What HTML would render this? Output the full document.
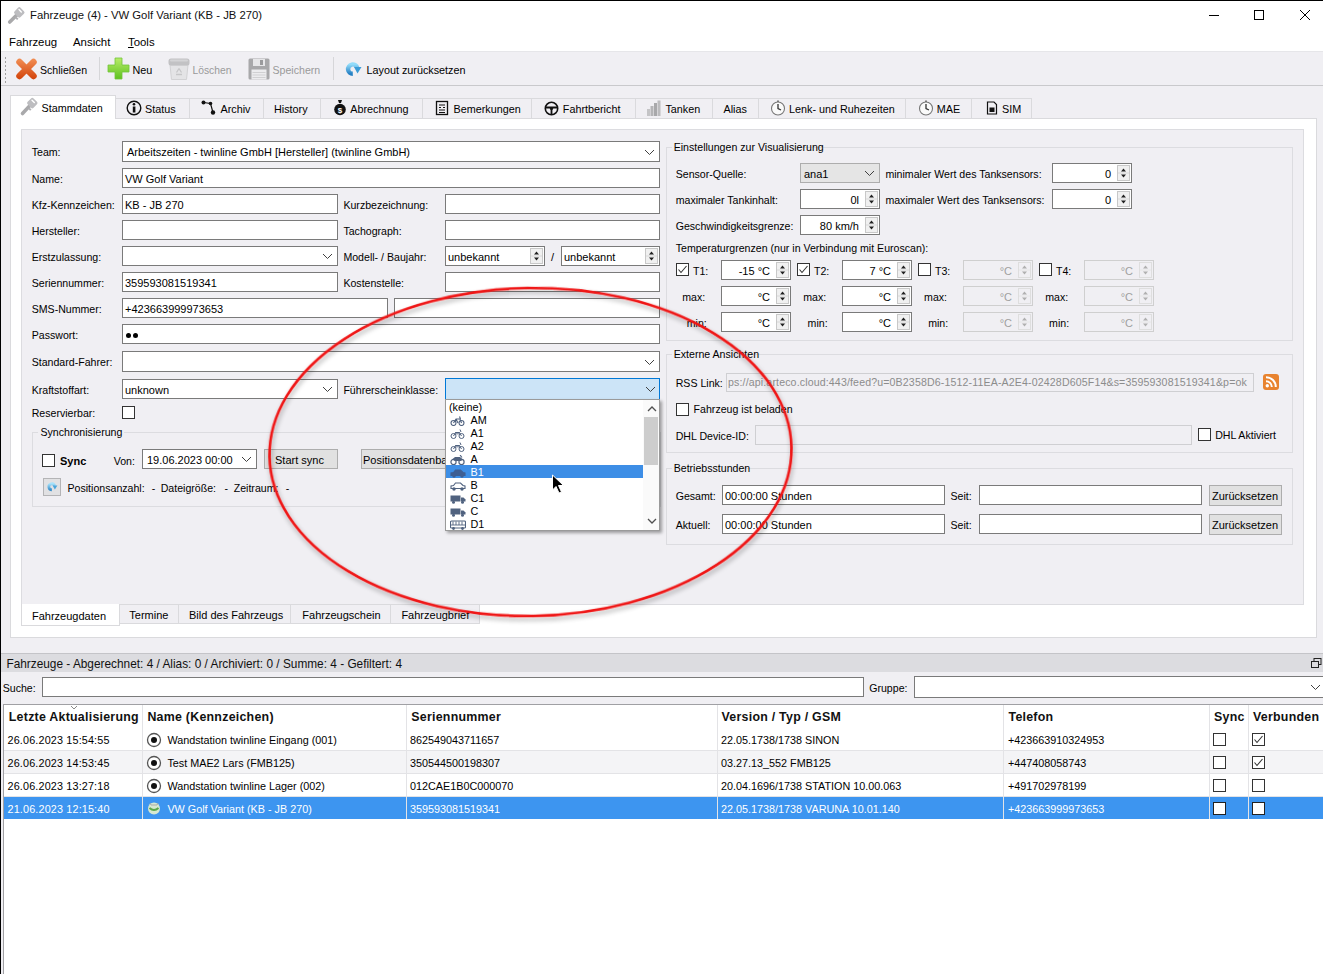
<!DOCTYPE html>
<html><head><meta charset="utf-8"><style>
html,body{margin:0;padding:0}
body{width:1323px;height:974px;overflow:hidden;position:relative;background:#f0eff3;font-family:"Liberation Sans", sans-serif}
.a{position:absolute}
.t{position:absolute;font-size:11px;line-height:13px;white-space:nowrap;color:#000}
u{text-decoration:underline}
</style></head><body>
<div class="a" style="left:0px;top:0px;width:1323px;height:52px;background:#ffffff;"></div>
<div class="a" style="left:0px;top:51px;width:1323px;height:1px;background:#e6e6e9;"></div>
<div class="a" style="left:0px;top:0px;width:1323px;height:1px;background:#000;"></div>
<svg class="a" style="left:4px;top:4px" width="24" height="24"><line x1="13.3" y1="10.4" x2="5.7" y2="18" stroke="#a9a9ab" stroke-width="3.6" stroke-linecap="round"/><rect x="11.100000000000001" y="4.2" width="8.4" height="8.4" rx="1.8" transform="rotate(45 15.3 8.4)" fill="#bdbdc0"/><line x1="15.0" y1="5.6000000000000005" x2="17.3" y2="7.9" stroke="#fff" stroke-width="1.4" stroke-linecap="round"/><path d="M11.8 13.4 l2 2" stroke="#b0b0b3" stroke-width="2"/></svg>
<div class="t" style="left:30px;top:9.0px;font-size:11.3px;color:#111;">Fahrzeuge (4) - VW Golf Variant (KB - JB 270)</div>
<div class="a" style="left:1209px;top:15px;width:10px;height:1px;background:#000;"></div>
<div class="a" style="left:1254px;top:10px;width:10px;height:10px;border:1px solid #000;box-sizing:border-box;"></div>
<svg class="a" style="left:1299px;top:9px" width="12" height="12"><path d="M1 1 L11 11 M11 1 L1 11" stroke="#000" stroke-width="1"/></svg>
<div class="t" style="left:9px;top:35.5px;font-size:11.4px;">Fahrzeug</div>
<div class="t" style="left:73px;top:35.5px;font-size:11.4px;">Ansicht</div>
<div class="t" style="left:128px;top:35.5px;font-size:11.4px;"><u>T</u>ools</div>
<div class="a" style="left:0px;top:52px;width:1323px;height:33px;background:#f0eff3;"></div>
<div class="a" style="left:0px;top:85px;width:1323px;height:1px;background:#c9c9cc;"></div>
<div class="a" style="left:5px;top:57px;width:1px;height:2px;background:#a0a0a0;"></div>
<div class="a" style="left:5px;top:61px;width:1px;height:2px;background:#a0a0a0;"></div>
<div class="a" style="left:5px;top:65px;width:1px;height:2px;background:#a0a0a0;"></div>
<div class="a" style="left:5px;top:69px;width:1px;height:2px;background:#a0a0a0;"></div>
<div class="a" style="left:5px;top:73px;width:1px;height:2px;background:#a0a0a0;"></div>
<div class="a" style="left:5px;top:77px;width:1px;height:2px;background:#a0a0a0;"></div>
<div class="a" style="left:5px;top:81px;width:1px;height:2px;background:#a0a0a0;"></div>
<svg class="a" style="left:15px;top:58px" width="23" height="22"><defs><linearGradient id="gx" gradientUnits="userSpaceOnUse" x1="0" y1="2" x2="0" y2="20"><stop offset="0" stop-color="#f08a50"/><stop offset="1" stop-color="#d4470e"/></linearGradient></defs><path d="M4.5 4 L18.5 18 M18.5 4 L4.5 18" stroke="url(#gx)" stroke-width="6.5" stroke-linecap="round"/></svg>
<div class="t" style="left:40px;top:63.5px;font-size:10.6px;">Schließen</div>
<div class="a" style="left:99px;top:57px;width:1px;height:23px;background:#d6d6d9;"></div>
<svg class="a" style="left:107px;top:57px" width="24" height="24"><defs><linearGradient id="gp" x1="0" y1="0" x2="0" y2="1"><stop offset="0" stop-color="#b8ec6a"/><stop offset="1" stop-color="#5ec21e"/></linearGradient></defs><path d="M8 1 H15 V8 H22 V15 H15 V22 H8 V15 H1 V8 H8 Z" fill="url(#gp)" stroke="#72c43a" stroke-width="0.8"/></svg>
<div class="t" style="left:132.5px;top:63.5px;font-size:10.8px;">Neu</div>
<svg class="a" style="left:167px;top:57px" width="24" height="24"><path d="M3 8 H21 L19.5 22.5 H4.5 Z" fill="#e4e4e6" stroke="#d2d2d4"/><rect x="1.5" y="1.5" width="21" height="7" rx="2.5" fill="#c2c2c4"/><rect x="3" y="2.5" width="18" height="2" rx="1" fill="#d4d4d6"/><path d="M12 11.5 L14.5 15.5 M9.5 15.5 L12 11.5 M9 17.5 H15" stroke="#c6c6c8" stroke-width="1.3" fill="none"/></svg>
<div class="t" style="left:192.5px;top:63.5px;font-size:10.3px;color:#9a9a9a;">Löschen</div>
<svg class="a" style="left:248px;top:58px" width="23" height="23"><rect x="0.5" y="0.5" width="21" height="21" rx="1.5" fill="#a8a8aa"/><rect x="5" y="1" width="12" height="7" fill="#e6e6e8"/><rect x="12" y="2" width="3" height="5" fill="#9a9a9c"/><rect x="3.5" y="11.5" width="15" height="10" fill="#ececee"/><path d="M4.5 14.5 H17.5 M4.5 17 H17.5 M4.5 19.5 H17.5" stroke="#d0d0d2"/></svg>
<div class="t" style="left:272.5px;top:63.5px;font-size:10.6px;color:#9a9a9a;">Speichern</div>
<div class="a" style="left:333px;top:57px;width:1px;height:23px;background:#d6d6d9;"></div>
<svg class="a" style="left:342px;top:59px" width="22" height="21"><defs><linearGradient id="gr" x1="0" y1="0" x2="0" y2="1"><stop offset="0" stop-color="#93dcfa"/><stop offset="1" stop-color="#2580c4"/></linearGradient></defs><path d="M10.8 14.8 A4.7 4.7 0 1 1 15.2 8.5" fill="none" stroke="url(#gr)" stroke-width="4.4"/><path d="M12 8 H19.5 L15.5 14.5 Z" fill="#3a9bd6"/></svg>
<div class="t" style="left:366.5px;top:63.5px;font-size:10.8px;">Layout zurücksetzen</div>
<div class="a" style="left:10px;top:118px;width:1307px;height:520px;background:#ffffff;border:1px solid #dadadd;box-sizing:border-box;"></div>
<div class="a" style="left:115px;top:98px;width:75px;height:21px;background:#f0eff3;border:1px solid #dadadd;box-sizing:border-box;"></div>
<div class="t" style="left:145px;top:102.5px;font-size:10.8px;">Status</div>
<div class="a" style="left:189px;top:98px;width:75px;height:21px;background:#f0eff3;border:1px solid #dadadd;box-sizing:border-box;"></div>
<div class="t" style="left:220.5px;top:102.5px;font-size:10.8px;">Archiv</div>
<div class="a" style="left:263px;top:98px;width:58px;height:21px;background:#f0eff3;border:1px solid #dadadd;box-sizing:border-box;"></div>
<div class="t" style="left:274px;top:102.5px;font-size:10.8px;">History</div>
<div class="a" style="left:320px;top:98px;width:103px;height:21px;background:#f0eff3;border:1px solid #dadadd;box-sizing:border-box;"></div>
<div class="t" style="left:350.3px;top:102.5px;font-size:10.8px;">Abrechnung</div>
<div class="a" style="left:422px;top:98px;width:110px;height:21px;background:#f0eff3;border:1px solid #dadadd;box-sizing:border-box;"></div>
<div class="t" style="left:453.5px;top:102.5px;font-size:10.8px;">Bemerkungen</div>
<div class="a" style="left:531px;top:98px;width:105px;height:21px;background:#f0eff3;border:1px solid #dadadd;box-sizing:border-box;"></div>
<div class="t" style="left:562.8px;top:102.5px;font-size:10.8px;">Fahrtbericht</div>
<div class="a" style="left:635px;top:98px;width:78px;height:21px;background:#f0eff3;border:1px solid #dadadd;box-sizing:border-box;"></div>
<div class="t" style="left:665.4px;top:102.5px;font-size:10.8px;">Tanken</div>
<div class="a" style="left:712px;top:98px;width:47px;height:21px;background:#f0eff3;border:1px solid #dadadd;box-sizing:border-box;"></div>
<div class="t" style="left:723.5px;top:102.5px;font-size:10.8px;">Alias</div>
<div class="a" style="left:758px;top:98px;width:148px;height:21px;background:#f0eff3;border:1px solid #dadadd;box-sizing:border-box;"></div>
<div class="t" style="left:789px;top:102.5px;font-size:10.8px;">Lenk- und Ruhezeiten</div>
<div class="a" style="left:905px;top:98px;width:67px;height:21px;background:#f0eff3;border:1px solid #dadadd;box-sizing:border-box;"></div>
<div class="t" style="left:936.7px;top:102.5px;font-size:10.8px;">MAE</div>
<div class="a" style="left:971px;top:98px;width:61px;height:21px;background:#f0eff3;border:1px solid #dadadd;box-sizing:border-box;"></div>
<div class="t" style="left:1002px;top:102.5px;font-size:10.8px;">SIM</div>
<div class="a" style="left:10px;top:95px;width:106px;height:24px;background:#ffffff;border:1px solid #dadadd;box-sizing:border-box;border-bottom:none;"></div>
<svg class="a" style="left:18px;top:94px" width="24" height="24"><line x1="12.3" y1="11.1" x2="4.5" y2="19.5" stroke="#a9a9ab" stroke-width="3.6" stroke-linecap="round"/><rect x="10.100000000000001" y="4.8999999999999995" width="8.4" height="8.4" rx="1.8" transform="rotate(45 14.3 9.1)" fill="#bdbdc0"/><line x1="14.0" y1="6.3" x2="16.3" y2="8.6" stroke="#fff" stroke-width="1.4" stroke-linecap="round"/><path d="M10.8 14.1 l2 2" stroke="#b0b0b3" stroke-width="2"/></svg>
<div class="t" style="left:41.5px;top:101.8px;font-size:10.8px;">Stammdaten</div>
<svg class="a" style="left:126px;top:100px" width="16" height="16"><circle cx="8" cy="8" r="6.8" fill="none" stroke="#111" stroke-width="1.4"/><rect x="6.8" y="6.5" width="2.6" height="6" fill="#111"/><circle cx="8" cy="4.3" r="1.3" fill="#111"/></svg>
<svg class="a" style="left:201px;top:100px" width="15" height="16"><path d="M2.5 2.5 L9.5 3.5 L12 12.5" fill="none" stroke="#111" stroke-width="1.2"/><circle cx="2.5" cy="2.5" r="2" fill="#111"/><circle cx="9.5" cy="3.5" r="1.8" fill="#111"/><circle cx="12" cy="12.5" r="2.2" fill="#111"/></svg>
<svg class="a" style="left:333px;top:99px" width="14" height="17"><path d="M5 1 H9 L8 4 H6 Z" fill="#111"/><circle cx="7" cy="10.5" r="5.8" fill="#111"/><text x="7" y="14" font-size="8" font-family="Liberation Sans" fill="#fff" text-anchor="middle" font-weight="bold">$</text></svg>
<svg class="a" style="left:435px;top:100px" width="14" height="16"><rect x="1.5" y="1.5" width="11" height="13" fill="none" stroke="#111" stroke-width="1.3"/><path d="M4 5 H10 M4 7.5 H6 M8 7.5 H10 M4 10 H10 M4 12.5 H10" stroke="#111" stroke-width="1.1"/></svg>
<svg class="a" style="left:544px;top:101px" width="15" height="15"><circle cx="7.5" cy="7.5" r="6.2" fill="none" stroke="#111" stroke-width="1.6"/><circle cx="7.5" cy="7.5" r="1.6" fill="#111"/><path d="M1.5 6.5 H13.5 M7.5 8 V14" stroke="#111" stroke-width="1.8"/></svg>
<svg class="a" style="left:646px;top:100px" width="16" height="16"><rect x="1" y="9" width="3" height="7" fill="#c4c4c6"/><rect x="4.5" y="6" width="3" height="10" fill="#b4b4b6"/><rect x="8" y="3" width="3" height="13" fill="#a8a8aa"/><rect x="11.5" y="0.5" width="3" height="15.5" fill="#bcbcbe"/></svg>
<svg class="a" style="left:770px;top:100px" width="16" height="16"><circle cx="8" cy="8.5" r="6.5" fill="#fafafa" stroke="#777" stroke-width="1.1"/><path d="M8 4 V8.5 L11 10" fill="none" stroke="#333" stroke-width="1.3"/><rect x="7" y="0.5" width="2" height="1.5" fill="#777"/></svg>
<svg class="a" style="left:918px;top:100px" width="16" height="16"><circle cx="8" cy="8.5" r="6.5" fill="#fafafa" stroke="#777" stroke-width="1.1"/><path d="M8 4 V8.5 L11 10" fill="none" stroke="#333" stroke-width="1.3"/><rect x="7" y="0.5" width="2" height="1.5" fill="#777"/></svg>
<svg class="a" style="left:986px;top:101px" width="12" height="14"><path d="M1.5 1 H8 L10.5 3.5 V13 H1.5 Z" fill="none" stroke="#111" stroke-width="1.2"/><rect x="3.5" y="6.5" width="5" height="4.5" fill="#111"/></svg>
<div class="a" style="left:21px;top:129px;width:1283px;height:476px;background:#f0eff3;border:1px solid #dcdce0;box-sizing:border-box;"></div>
<div class="a" style="left:119px;top:604px;width:61px;height:20px;background:#f0eff3;border:1px solid #dadadd;box-sizing:border-box;"></div>
<div class="t" style="left:129.3px;top:609.0px;">Termine</div>
<div class="a" style="left:178px;top:604px;width:114px;height:20px;background:#f0eff3;border:1px solid #dadadd;box-sizing:border-box;"></div>
<div class="t" style="left:189px;top:609.0px;">Bild des Fahrzeugs</div>
<div class="a" style="left:290px;top:604px;width:102px;height:20px;background:#f0eff3;border:1px solid #dadadd;box-sizing:border-box;"></div>
<div class="t" style="left:302.3px;top:609.0px;">Fahrzeugschein</div>
<div class="a" style="left:390px;top:604px;width:90px;height:20px;background:#f0eff3;border:1px solid #dadadd;box-sizing:border-box;"></div>
<div class="t" style="left:401.4px;top:609.0px;">Fahrzeugbrief</div>
<div class="a" style="left:21px;top:604px;width:99px;height:22px;background:#ffffff;border:1px solid #dadadd;box-sizing:border-box;border-top:none;"></div>
<div class="t" style="left:32px;top:610.0px;">Fahrzeugdaten</div>
<div class="t" style="left:31.7px;top:145.5px;font-size:10.6px;">Team:</div>
<div class="a" style="left:122px;top:141px;width:538px;height:21px;background:#fff;border:1px solid #7a7a7a;box-sizing:border-box;"></div>
<svg class="a" style="left:644px;top:148.5px" width="11" height="6.5"><path d="M1 1 L5.5 5.5 L10 1" fill="none" stroke="#404040" stroke-width="1"/></svg>
<div class="t" style="left:127px;top:145.8px;">Arbeitszeiten - twinline GmbH [Hersteller] (twinline GmbH)</div>
<div class="t" style="left:31.7px;top:173.0px;font-size:10.6px;">Name:</div>
<div class="a" style="left:122px;top:168px;width:538px;height:20px;background:#fff;border:1px solid #7a7a7a;box-sizing:border-box;"></div>
<div class="t" style="left:125px;top:172.5px;">VW Golf Variant</div>
<div class="t" style="left:31.7px;top:199.0px;font-size:10.6px;">Kfz-Kennzeichen:</div>
<div class="a" style="left:122px;top:194px;width:216px;height:20px;background:#fff;border:1px solid #7a7a7a;box-sizing:border-box;"></div>
<div class="t" style="left:125px;top:198.5px;">KB - JB 270</div>
<div class="t" style="left:343.4px;top:199.0px;font-size:10.6px;">Kurzbezeichnung:</div>
<div class="a" style="left:445px;top:194px;width:215px;height:20px;background:#fff;border:1px solid #7a7a7a;box-sizing:border-box;"></div>
<div class="t" style="left:31.7px;top:225.0px;font-size:10.6px;">Hersteller:</div>
<div class="a" style="left:122px;top:220px;width:216px;height:20px;background:#fff;border:1px solid #7a7a7a;box-sizing:border-box;"></div>
<div class="t" style="left:343.4px;top:225.0px;font-size:10.6px;">Tachograph:</div>
<div class="a" style="left:445px;top:220px;width:215px;height:20px;background:#fff;border:1px solid #7a7a7a;box-sizing:border-box;"></div>
<div class="t" style="left:31.7px;top:251.0px;font-size:10.6px;">Erstzulassung:</div>
<div class="a" style="left:122px;top:246px;width:216px;height:20px;background:#fff;border:1px solid #7a7a7a;box-sizing:border-box;"></div>
<svg class="a" style="left:322px;top:253.0px" width="11" height="6.5"><path d="M1 1 L5.5 5.5 L10 1" fill="none" stroke="#404040" stroke-width="1"/></svg>
<div class="t" style="left:343.4px;top:251.0px;font-size:10.6px;">Modell- / Baujahr:</div>
<div class="a" style="left:445px;top:246px;width:100px;height:20px;background:#fff;border:1px solid #7a7a7a;box-sizing:border-box;"></div>
<div class="t" style="left:448px;top:250.5px;">unbekannt</div>
<div class="a" style="left:530px;top:248px;width:13px;height:16px;background:#f0f0f0;border:1px solid #c8c8c8;box-sizing:border-box;"></div>
<svg class="a" style="left:530px;top:248px" width="13" height="16"><path d="M4 6.5 L6.5 3.5 L9 6.5 Z M4 9.5 L6.5 12.5 L9 9.5 Z" fill="#202020"/><path d="M1 8.0 H12" stroke="#d8d8d8" stroke-width="1"/></svg>
<div class="t" style="left:551px;top:251.0px;">/</div>
<div class="a" style="left:561px;top:246px;width:99px;height:20px;background:#fff;border:1px solid #7a7a7a;box-sizing:border-box;"></div>
<div class="t" style="left:564px;top:250.5px;">unbekannt</div>
<div class="a" style="left:645px;top:248px;width:13px;height:16px;background:#f0f0f0;border:1px solid #c8c8c8;box-sizing:border-box;"></div>
<svg class="a" style="left:645px;top:248px" width="13" height="16"><path d="M4 6.5 L6.5 3.5 L9 6.5 Z M4 9.5 L6.5 12.5 L9 9.5 Z" fill="#202020"/><path d="M1 8.0 H12" stroke="#d8d8d8" stroke-width="1"/></svg>
<div class="t" style="left:31.7px;top:277.0px;font-size:10.6px;">Seriennummer:</div>
<div class="a" style="left:122px;top:272px;width:216px;height:20px;background:#fff;border:1px solid #7a7a7a;box-sizing:border-box;"></div>
<div class="t" style="left:125px;top:276.5px;">359593081519341</div>
<div class="t" style="left:343.4px;top:277.0px;font-size:10.6px;">Kostenstelle:</div>
<div class="a" style="left:445px;top:272px;width:215px;height:20px;background:#fff;border:1px solid #7a7a7a;box-sizing:border-box;"></div>
<div class="t" style="left:31.7px;top:303.0px;font-size:10.6px;">SMS-Nummer:</div>
<div class="a" style="left:122px;top:298px;width:266px;height:20px;background:#fff;border:1px solid #7a7a7a;box-sizing:border-box;"></div>
<div class="t" style="left:125px;top:302.5px;">+423663999973653</div>
<div class="a" style="left:394px;top:298px;width:266px;height:20px;background:#fff;border:1px solid #7a7a7a;box-sizing:border-box;"></div>
<div class="t" style="left:31.7px;top:329.0px;font-size:10.6px;">Passwort:</div>
<div class="a" style="left:122px;top:324px;width:538px;height:20px;background:#fff;border:1px solid #7a7a7a;box-sizing:border-box;"></div>
<div class="a" style="left:126px;top:333px;width:5px;height:5px;border-radius:50%;background:#000"></div><div class="a" style="left:132.5px;top:333px;width:5px;height:5px;border-radius:50%;background:#000"></div>
<div class="t" style="left:31.7px;top:355.5px;font-size:10.6px;">Standard-Fahrer:</div>
<div class="a" style="left:122px;top:351px;width:538px;height:21px;background:#fff;border:1px solid #7a7a7a;box-sizing:border-box;"></div>
<svg class="a" style="left:644px;top:358.5px" width="11" height="6.5"><path d="M1 1 L5.5 5.5 L10 1" fill="none" stroke="#404040" stroke-width="1"/></svg>
<div class="t" style="left:31.7px;top:384.0px;font-size:10.6px;">Kraftstoffart:</div>
<div class="a" style="left:122px;top:379px;width:216px;height:20px;background:#fff;border:1px solid #7a7a7a;box-sizing:border-box;"></div>
<div class="t" style="left:125px;top:383.5px;">unknown</div>
<svg class="a" style="left:322px;top:386.0px" width="11" height="6.5"><path d="M1 1 L5.5 5.5 L10 1" fill="none" stroke="#404040" stroke-width="1"/></svg>
<div class="t" style="left:343.4px;top:384.0px;font-size:10.6px;">Führerscheinklasse:</div>
<div class="a" style="left:445px;top:378px;width:215px;height:22px;background:#cce4f7;border:1px solid #0078d7;box-sizing:border-box;"></div>
<svg class="a" style="left:645px;top:386px" width="11" height="6.5"><path d="M1 1 L5.5 5.5 L10 1" fill="none" stroke="#404040" stroke-width="1"/></svg>
<div class="t" style="left:31.7px;top:407.0px;font-size:10.6px;">Reservierbar:</div>
<div class="a" style="left:122px;top:406px;width:13px;height:13px;background:#fff;border:1px solid #333;box-sizing:border-box;"></div>
<div class="a" style="left:32px;top:432px;width:629px;height:75px;border:1px solid #dcdce0;box-sizing:border-box;"></div>
<div class="a" style="left:38px;top:425px;width:86px;height:14px;background:#f0eff3;"></div>
<div class="t" style="left:40.5px;top:426.0px;font-size:10.6px;">Synchronisierung</div>
<div class="a" style="left:42px;top:454px;width:13px;height:13px;background:#fff;border:1px solid #333;box-sizing:border-box;"></div>
<div class="t" style="left:60px;top:454.5px;font-weight:bold;">Sync</div>
<div class="t" style="left:113.7px;top:454.5px;font-size:10.6px;">Von:</div>
<div class="a" style="left:142px;top:449px;width:115px;height:20px;background:#fff;border:1px solid #7a7a7a;box-sizing:border-box;"></div>
<div class="t" style="left:147px;top:453.5px;">19.06.2023 00:00</div>
<svg class="a" style="left:241px;top:456.0px" width="11" height="6.5"><path d="M1 1 L5.5 5.5 L10 1" fill="none" stroke="#404040" stroke-width="1"/></svg>
<div class="a" style="left:264px;top:449px;width:74px;height:20px;background:#e1e1e1;border:1px solid #adadad;box-sizing:border-box;"></div>
<div class="t" style="left:275px;top:453.5px;">Start sync</div>
<div class="a" style="left:361px;top:449px;width:120px;height:20px;background:#e1e1e1;border:1px solid #adadad;box-sizing:border-box;"></div>
<div class="t" style="left:363px;top:453.5px;">Positionsdatenbank</div>
<div class="a" style="left:43px;top:478px;width:18px;height:18px;background:#e1e1e3;border:1px solid #b4b4b6;box-sizing:border-box;"></div>
<svg class="a" style="left:45px;top:480px" width="14" height="14" viewBox="0 0 22 21"><defs><linearGradient id="gr2" x1="0" y1="0" x2="0" y2="1"><stop offset="0" stop-color="#a8e2fa"/><stop offset="1" stop-color="#3a90cc"/></linearGradient></defs><path d="M10.8 14.8 A4.7 4.7 0 1 1 15.2 8.5" fill="none" stroke="url(#gr2)" stroke-width="4.4"/><path d="M12 8 H19.5 L15.5 14.5 Z" fill="#4aa6dc"/></svg>
<div class="t" style="left:67.5px;top:481.5px;font-size:10.6px;">Positionsanzahl:</div>
<div class="t" style="left:151.8px;top:481.5px;font-size:10.6px;">-</div>
<div class="t" style="left:160.7px;top:481.5px;font-size:10.6px;">Dateigröße:</div>
<div class="t" style="left:224.5px;top:481.5px;font-size:10.6px;">-</div>
<div class="t" style="left:233.7px;top:481.5px;font-size:10.6px;">Zeitraum:</div>
<div class="t" style="left:285.8px;top:481.5px;font-size:10.6px;">-</div>
<div class="a" style="left:666px;top:147px;width:627px;height:194px;border:1px solid #dcdce0;box-sizing:border-box;"></div>
<div class="a" style="left:672px;top:140px;width:126px;height:14px;background:#f0eff3;"></div>
<div class="t" style="left:673.7px;top:141.0px;font-size:10.6px;">Einstellungen zur Visualisierung</div>
<div class="t" style="left:675.7px;top:168.0px;font-size:10.6px;">Sensor-Quelle:</div>
<div class="a" style="left:800px;top:163px;width:80px;height:20px;background:#e5e5e5;border:1px solid #adadad;box-sizing:border-box;"></div>
<div class="t" style="left:804px;top:167.5px;">ana1</div>
<svg class="a" style="left:864px;top:170.0px" width="11" height="6.5"><path d="M1 1 L5.5 5.5 L10 1" fill="none" stroke="#404040" stroke-width="1"/></svg>
<div class="t" style="left:885.4px;top:168.0px;font-size:10.6px;">minimaler Wert des Tanksensors:</div>
<div class="a" style="left:1052px;top:163px;width:80px;height:20px;background:#fff;border:1px solid #7a7a7a;box-sizing:border-box;"></div>
<div class="t" style="left:1052px;width:59px;top:167.5px;text-align:right;color:#000">0</div>
<div class="a" style="left:1117px;top:165px;width:13px;height:16px;background:#f0f0f0;border:1px solid #c8c8c8;box-sizing:border-box;"></div>
<svg class="a" style="left:1117px;top:165px" width="13" height="16"><path d="M4 6.5 L6.5 3.5 L9 6.5 Z M4 9.5 L6.5 12.5 L9 9.5 Z" fill="#202020"/><path d="M1 8.0 H12" stroke="#d8d8d8" stroke-width="1"/></svg>
<div class="t" style="left:675.7px;top:194.0px;font-size:10.6px;">maximaler Tankinhalt:</div>
<div class="a" style="left:800px;top:189px;width:80px;height:20px;background:#fff;border:1px solid #7a7a7a;box-sizing:border-box;"></div>
<div class="t" style="left:800px;width:59px;top:193.5px;text-align:right;color:#000">0l</div>
<div class="a" style="left:865px;top:191px;width:13px;height:16px;background:#f0f0f0;border:1px solid #c8c8c8;box-sizing:border-box;"></div>
<svg class="a" style="left:865px;top:191px" width="13" height="16"><path d="M4 6.5 L6.5 3.5 L9 6.5 Z M4 9.5 L6.5 12.5 L9 9.5 Z" fill="#202020"/><path d="M1 8.0 H12" stroke="#d8d8d8" stroke-width="1"/></svg>
<div class="t" style="left:885.4px;top:194.0px;font-size:10.6px;">maximaler Wert des Tanksensors:</div>
<div class="a" style="left:1052px;top:189px;width:80px;height:20px;background:#fff;border:1px solid #7a7a7a;box-sizing:border-box;"></div>
<div class="t" style="left:1052px;width:59px;top:193.5px;text-align:right;color:#000">0</div>
<div class="a" style="left:1117px;top:191px;width:13px;height:16px;background:#f0f0f0;border:1px solid #c8c8c8;box-sizing:border-box;"></div>
<svg class="a" style="left:1117px;top:191px" width="13" height="16"><path d="M4 6.5 L6.5 3.5 L9 6.5 Z M4 9.5 L6.5 12.5 L9 9.5 Z" fill="#202020"/><path d="M1 8.0 H12" stroke="#d8d8d8" stroke-width="1"/></svg>
<div class="t" style="left:675.7px;top:220.0px;font-size:10.6px;">Geschwindigkeitsgrenze:</div>
<div class="a" style="left:800px;top:215px;width:80px;height:20px;background:#fff;border:1px solid #7a7a7a;box-sizing:border-box;"></div>
<div class="t" style="left:800px;width:59px;top:219.5px;text-align:right;color:#000">80 km/h</div>
<div class="a" style="left:865px;top:217px;width:13px;height:16px;background:#f0f0f0;border:1px solid #c8c8c8;box-sizing:border-box;"></div>
<svg class="a" style="left:865px;top:217px" width="13" height="16"><path d="M4 6.5 L6.5 3.5 L9 6.5 Z M4 9.5 L6.5 12.5 L9 9.5 Z" fill="#202020"/><path d="M1 8.0 H12" stroke="#d8d8d8" stroke-width="1"/></svg>
<div class="t" style="left:675.7px;top:242.0px;font-size:10.6px;">Temperaturgrenzen (nur in Verbindung mit Euroscan):</div>
<div class="a" style="left:676px;top:263px;width:13px;height:13px;background:#fff;border:1px solid #333;box-sizing:border-box;"></div>
<svg class="a" style="left:676px;top:263px" width="13" height="13"><path d="M2.5 6.5 L5 9.5 L10.5 3" fill="none" stroke="#333" stroke-width="1.1"/></svg>
<div class="t" style="left:693px;top:264.5px;font-size:10.6px;">T1:</div>
<div class="a" style="left:721px;top:260px;width:70px;height:20px;background:#fff;border:1px solid #7a7a7a;box-sizing:border-box;"></div>
<div class="t" style="left:721px;width:49px;top:264.5px;text-align:right;color:#000">-15 °C</div>
<div class="a" style="left:776px;top:262px;width:13px;height:16px;background:#f0f0f0;border:1px solid #c8c8c8;box-sizing:border-box;"></div>
<svg class="a" style="left:776px;top:262px" width="13" height="16"><path d="M4 6.5 L6.5 3.5 L9 6.5 Z M4 9.5 L6.5 12.5 L9 9.5 Z" fill="#202020"/><path d="M1 8.0 H12" stroke="#d8d8d8" stroke-width="1"/></svg>
<div class="t" style="left:682.2px;top:290.5px;font-size:10.6px;">max:</div>
<div class="a" style="left:721px;top:286px;width:70px;height:20px;background:#fff;border:1px solid #7a7a7a;box-sizing:border-box;"></div>
<div class="t" style="left:721px;width:49px;top:290.5px;text-align:right;color:#000">°C</div>
<div class="a" style="left:776px;top:288px;width:13px;height:16px;background:#f0f0f0;border:1px solid #c8c8c8;box-sizing:border-box;"></div>
<svg class="a" style="left:776px;top:288px" width="13" height="16"><path d="M4 6.5 L6.5 3.5 L9 6.5 Z M4 9.5 L6.5 12.5 L9 9.5 Z" fill="#202020"/><path d="M1 8.0 H12" stroke="#d8d8d8" stroke-width="1"/></svg>
<div class="t" style="left:686.8px;top:316.5px;font-size:10.6px;">min:</div>
<div class="a" style="left:721px;top:312px;width:70px;height:20px;background:#fff;border:1px solid #7a7a7a;box-sizing:border-box;"></div>
<div class="t" style="left:721px;width:49px;top:316.5px;text-align:right;color:#000">°C</div>
<div class="a" style="left:776px;top:314px;width:13px;height:16px;background:#f0f0f0;border:1px solid #c8c8c8;box-sizing:border-box;"></div>
<svg class="a" style="left:776px;top:314px" width="13" height="16"><path d="M4 6.5 L6.5 3.5 L9 6.5 Z M4 9.5 L6.5 12.5 L9 9.5 Z" fill="#202020"/><path d="M1 8.0 H12" stroke="#d8d8d8" stroke-width="1"/></svg>
<div class="a" style="left:797px;top:263px;width:13px;height:13px;background:#fff;border:1px solid #333;box-sizing:border-box;"></div>
<svg class="a" style="left:797px;top:263px" width="13" height="13"><path d="M2.5 6.5 L5 9.5 L10.5 3" fill="none" stroke="#333" stroke-width="1.1"/></svg>
<div class="t" style="left:814px;top:264.5px;font-size:10.6px;">T2:</div>
<div class="a" style="left:842px;top:260px;width:70px;height:20px;background:#fff;border:1px solid #7a7a7a;box-sizing:border-box;"></div>
<div class="t" style="left:842px;width:49px;top:264.5px;text-align:right;color:#000">7 °C</div>
<div class="a" style="left:897px;top:262px;width:13px;height:16px;background:#f0f0f0;border:1px solid #c8c8c8;box-sizing:border-box;"></div>
<svg class="a" style="left:897px;top:262px" width="13" height="16"><path d="M4 6.5 L6.5 3.5 L9 6.5 Z M4 9.5 L6.5 12.5 L9 9.5 Z" fill="#202020"/><path d="M1 8.0 H12" stroke="#d8d8d8" stroke-width="1"/></svg>
<div class="t" style="left:803.3px;top:290.5px;font-size:10.6px;">max:</div>
<div class="a" style="left:842px;top:286px;width:70px;height:20px;background:#fff;border:1px solid #7a7a7a;box-sizing:border-box;"></div>
<div class="t" style="left:842px;width:49px;top:290.5px;text-align:right;color:#000">°C</div>
<div class="a" style="left:897px;top:288px;width:13px;height:16px;background:#f0f0f0;border:1px solid #c8c8c8;box-sizing:border-box;"></div>
<svg class="a" style="left:897px;top:288px" width="13" height="16"><path d="M4 6.5 L6.5 3.5 L9 6.5 Z M4 9.5 L6.5 12.5 L9 9.5 Z" fill="#202020"/><path d="M1 8.0 H12" stroke="#d8d8d8" stroke-width="1"/></svg>
<div class="t" style="left:807.6px;top:316.5px;font-size:10.6px;">min:</div>
<div class="a" style="left:842px;top:312px;width:70px;height:20px;background:#fff;border:1px solid #7a7a7a;box-sizing:border-box;"></div>
<div class="t" style="left:842px;width:49px;top:316.5px;text-align:right;color:#000">°C</div>
<div class="a" style="left:897px;top:314px;width:13px;height:16px;background:#f0f0f0;border:1px solid #c8c8c8;box-sizing:border-box;"></div>
<svg class="a" style="left:897px;top:314px" width="13" height="16"><path d="M4 6.5 L6.5 3.5 L9 6.5 Z M4 9.5 L6.5 12.5 L9 9.5 Z" fill="#202020"/><path d="M1 8.0 H12" stroke="#d8d8d8" stroke-width="1"/></svg>
<div class="a" style="left:918px;top:263px;width:13px;height:13px;background:#fff;border:1px solid #333;box-sizing:border-box;"></div>
<div class="t" style="left:935px;top:264.5px;font-size:10.6px;">T3:</div>
<div class="a" style="left:963px;top:260px;width:70px;height:20px;background:#f0eff3;border:1px solid #cfcfcf;box-sizing:border-box;"></div>
<div class="t" style="left:963px;width:49px;top:264.5px;text-align:right;color:#a0a0a0">°C</div>
<div class="a" style="left:1018px;top:262px;width:13px;height:16px;background:#f0eff3;border:1px solid #dedede;box-sizing:border-box;"></div>
<svg class="a" style="left:1018px;top:262px" width="13" height="16"><path d="M4 6.5 L6.5 3.5 L9 6.5 Z M4 9.5 L6.5 12.5 L9 9.5 Z" fill="#b0b0b0"/><path d="M1 8.0 H12" stroke="#e6e6e6" stroke-width="1"/></svg>
<div class="t" style="left:924.1px;top:290.5px;font-size:10.6px;">max:</div>
<div class="a" style="left:963px;top:286px;width:70px;height:20px;background:#f0eff3;border:1px solid #cfcfcf;box-sizing:border-box;"></div>
<div class="t" style="left:963px;width:49px;top:290.5px;text-align:right;color:#a0a0a0">°C</div>
<div class="a" style="left:1018px;top:288px;width:13px;height:16px;background:#f0eff3;border:1px solid #dedede;box-sizing:border-box;"></div>
<svg class="a" style="left:1018px;top:288px" width="13" height="16"><path d="M4 6.5 L6.5 3.5 L9 6.5 Z M4 9.5 L6.5 12.5 L9 9.5 Z" fill="#b0b0b0"/><path d="M1 8.0 H12" stroke="#e6e6e6" stroke-width="1"/></svg>
<div class="t" style="left:928.2px;top:316.5px;font-size:10.6px;">min:</div>
<div class="a" style="left:963px;top:312px;width:70px;height:20px;background:#f0eff3;border:1px solid #cfcfcf;box-sizing:border-box;"></div>
<div class="t" style="left:963px;width:49px;top:316.5px;text-align:right;color:#a0a0a0">°C</div>
<div class="a" style="left:1018px;top:314px;width:13px;height:16px;background:#f0eff3;border:1px solid #dedede;box-sizing:border-box;"></div>
<svg class="a" style="left:1018px;top:314px" width="13" height="16"><path d="M4 6.5 L6.5 3.5 L9 6.5 Z M4 9.5 L6.5 12.5 L9 9.5 Z" fill="#b0b0b0"/><path d="M1 8.0 H12" stroke="#e6e6e6" stroke-width="1"/></svg>
<div class="a" style="left:1039px;top:263px;width:13px;height:13px;background:#fff;border:1px solid #333;box-sizing:border-box;"></div>
<div class="t" style="left:1056px;top:264.5px;font-size:10.6px;">T4:</div>
<div class="a" style="left:1084px;top:260px;width:70px;height:20px;background:#f0eff3;border:1px solid #cfcfcf;box-sizing:border-box;"></div>
<div class="t" style="left:1084px;width:49px;top:264.5px;text-align:right;color:#a0a0a0">°C</div>
<div class="a" style="left:1139px;top:262px;width:13px;height:16px;background:#f0eff3;border:1px solid #dedede;box-sizing:border-box;"></div>
<svg class="a" style="left:1139px;top:262px" width="13" height="16"><path d="M4 6.5 L6.5 3.5 L9 6.5 Z M4 9.5 L6.5 12.5 L9 9.5 Z" fill="#b0b0b0"/><path d="M1 8.0 H12" stroke="#e6e6e6" stroke-width="1"/></svg>
<div class="t" style="left:1045.3px;top:290.5px;font-size:10.6px;">max:</div>
<div class="a" style="left:1084px;top:286px;width:70px;height:20px;background:#f0eff3;border:1px solid #cfcfcf;box-sizing:border-box;"></div>
<div class="t" style="left:1084px;width:49px;top:290.5px;text-align:right;color:#a0a0a0">°C</div>
<div class="a" style="left:1139px;top:288px;width:13px;height:16px;background:#f0eff3;border:1px solid #dedede;box-sizing:border-box;"></div>
<svg class="a" style="left:1139px;top:288px" width="13" height="16"><path d="M4 6.5 L6.5 3.5 L9 6.5 Z M4 9.5 L6.5 12.5 L9 9.5 Z" fill="#b0b0b0"/><path d="M1 8.0 H12" stroke="#e6e6e6" stroke-width="1"/></svg>
<div class="t" style="left:1049.1px;top:316.5px;font-size:10.6px;">min:</div>
<div class="a" style="left:1084px;top:312px;width:70px;height:20px;background:#f0eff3;border:1px solid #cfcfcf;box-sizing:border-box;"></div>
<div class="t" style="left:1084px;width:49px;top:316.5px;text-align:right;color:#a0a0a0">°C</div>
<div class="a" style="left:1139px;top:314px;width:13px;height:16px;background:#f0eff3;border:1px solid #dedede;box-sizing:border-box;"></div>
<svg class="a" style="left:1139px;top:314px" width="13" height="16"><path d="M4 6.5 L6.5 3.5 L9 6.5 Z M4 9.5 L6.5 12.5 L9 9.5 Z" fill="#b0b0b0"/><path d="M1 8.0 H12" stroke="#e6e6e6" stroke-width="1"/></svg>
<div class="a" style="left:666px;top:354px;width:627px;height:99px;border:1px solid #dcdce0;box-sizing:border-box;"></div>
<div class="a" style="left:672px;top:347px;width:72px;height:14px;background:#f0eff3;"></div>
<div class="t" style="left:673.7px;top:348.0px;font-size:10.6px;">Externe Ansichten</div>
<div class="t" style="left:675.7px;top:377.0px;font-size:10.6px;">RSS Link:</div>
<div class="a" style="left:726px;top:373px;width:528px;height:19px;background:#f0eff3;border:1px solid #cfcfd2;box-sizing:border-box;"></div>
<div class="t" style="left:728px;top:376px;width:523px;overflow:hidden;color:#8c8c8c;font-size:10.6px;letter-spacing:0.14px">ps://api.arteco.cloud:443/feed?u=0B2358D6-1512-11EA-A2E4-02428D605F14&amp;s=359593081519341&amp;p=ok</div>
<svg class="a" style="left:1263px;top:374px" width="16" height="16"><rect x="0" y="0" width="16" height="16" rx="3" fill="#e8832f"/><circle cx="4.3" cy="11.7" r="1.7" fill="#fff"/><path d="M3 7.2 A5.8 5.8 0 0 1 8.8 13 M3 3.2 A9.8 9.8 0 0 1 12.8 13" fill="none" stroke="#fff" stroke-width="2"/></svg>
<div class="a" style="left:676px;top:403px;width:13px;height:13px;background:#fff;border:1px solid #333;box-sizing:border-box;"></div>
<div class="t" style="left:693.6px;top:402.5px;font-size:10.6px;">Fahrzeug ist beladen</div>
<div class="t" style="left:675.7px;top:429.8px;font-size:10.6px;">DHL Device-ID:</div>
<div class="a" style="left:755px;top:425px;width:437px;height:20px;background:#f0eff3;border:1px solid #cfcfd2;box-sizing:border-box;"></div>
<div class="a" style="left:1198px;top:428px;width:13px;height:13px;background:#fff;border:1px solid #333;box-sizing:border-box;"></div>
<div class="t" style="left:1215.2px;top:428.5px;font-size:10.6px;">DHL Aktiviert</div>
<div class="a" style="left:666px;top:468px;width:627px;height:77px;border:1px solid #dcdce0;box-sizing:border-box;"></div>
<div class="a" style="left:672px;top:461px;width:63px;height:14px;background:#f0eff3;"></div>
<div class="t" style="left:673.7px;top:462.0px;font-size:10.6px;">Betriebsstunden</div>
<div class="t" style="left:675.7px;top:490.0px;font-size:10.6px;">Gesamt:</div>
<div class="a" style="left:722px;top:485px;width:223px;height:20px;background:#fff;border:1px solid #7a7a7a;box-sizing:border-box;"></div>
<div class="t" style="left:725px;top:489.5px;">00:00:00 Stunden</div>
<div class="t" style="left:950.5px;top:490.0px;font-size:10.6px;">Seit:</div>
<div class="a" style="left:979px;top:485px;width:223px;height:20px;background:#fff;border:1px solid #7a7a7a;box-sizing:border-box;"></div>
<div class="a" style="left:1209px;top:485px;width:73px;height:21px;background:#e1e1e1;border:1px solid #adadad;box-sizing:border-box;"></div>
<div class="t" style="left:1212px;top:490.0px;">Zurücksetzen</div>
<div class="t" style="left:675.7px;top:519.0px;font-size:10.6px;">Aktuell:</div>
<div class="a" style="left:722px;top:514px;width:223px;height:20px;background:#fff;border:1px solid #7a7a7a;box-sizing:border-box;"></div>
<div class="t" style="left:725px;top:518.5px;">00:00:00 Stunden</div>
<div class="t" style="left:950.5px;top:519.0px;font-size:10.6px;">Seit:</div>
<div class="a" style="left:979px;top:514px;width:223px;height:20px;background:#fff;border:1px solid #7a7a7a;box-sizing:border-box;"></div>
<div class="a" style="left:1209px;top:514px;width:73px;height:21px;background:#e1e1e1;border:1px solid #adadad;box-sizing:border-box;"></div>
<div class="t" style="left:1212px;top:519.0px;">Zurücksetzen</div>
<div class="a" style="left:445px;top:399px;width:215px;height:132px;background:#fff;border:1px solid #9a9a9a;box-sizing:border-box;box-shadow:2px 2px 3px rgba(0,0,0,0.35)"></div>
<div class="a" style="left:446px;top:465px;width:197px;height:13px;background:#3d8ee6;"></div>
<div class="t" style="left:449px;top:401.0px;font-size:10.8px;">(keine)</div>
<div class="t" style="left:470.5px;top:414.0px;font-size:10.8px;">AM</div>
<svg class="a" style="left:450px;top:415.5px" width="16" height="10"><circle cx="3.5" cy="7" r="2.5" fill="none" stroke="#50627f" stroke-width="1.1"/><circle cx="11.5" cy="7" r="2.5" fill="none" stroke="#50627f" stroke-width="1.1"/><path d="M3.5 7 L6 3 H10 L11.5 7 M6 3 L8 7 M9.5 0.5 L10.5 3" fill="none" stroke="#50627f" stroke-width="1.1"/></svg>
<div class="t" style="left:470.5px;top:427.0px;font-size:10.8px;">A1</div>
<svg class="a" style="left:450px;top:428.5px" width="16" height="10"><circle cx="3.5" cy="7" r="2.5" fill="none" stroke="#50627f" stroke-width="1"/><circle cx="11.5" cy="7" r="2.5" fill="none" stroke="#50627f" stroke-width="1"/><path d="M3.5 7 L5.5 3.5 H9.5 L11.5 7 M10 0.5 L11 3" fill="none" stroke="#50627f" stroke-width="1"/><rect x="5" y="3" width="5" height="2.5" fill="#50627f" opacity="0.6"/></svg>
<div class="t" style="left:470.5px;top:440.0px;font-size:10.8px;">A2</div>
<svg class="a" style="left:450px;top:441.5px" width="16" height="10"><circle cx="3.5" cy="7" r="2.5" fill="none" stroke="#50627f" stroke-width="1"/><circle cx="11.5" cy="7" r="2.5" fill="none" stroke="#50627f" stroke-width="1"/><path d="M3.5 7 L5.5 3.5 H9.5 L11.5 7 M10 0.5 L11 3" fill="none" stroke="#50627f" stroke-width="1"/><rect x="5" y="3" width="5" height="2.5" fill="#50627f" opacity="0.6"/></svg>
<div class="t" style="left:470.5px;top:453.0px;font-size:10.8px;">A</div>
<svg class="a" style="left:450px;top:454.5px" width="16" height="10"><circle cx="3.5" cy="7" r="2.6" fill="none" stroke="#50627f" stroke-width="1.2"/><circle cx="11.5" cy="7" r="2.6" fill="none" stroke="#50627f" stroke-width="1.2"/><path d="M2 4.5 L5 2 H10 L13 4.5 L11 6 H5 Z" fill="#50627f"/><path d="M10 0 L12 2.5" stroke="#50627f" stroke-width="1.2"/></svg>
<div class="t" style="left:470.5px;top:466.0px;font-size:10.8px;color:#fff;">B1</div>
<svg class="a" style="left:450px;top:467.5px" width="16" height="10"><path d="M1 7.5 V5 L3.5 4.5 L5.5 2 H10.5 L13 4.5 L15 5 V7.5 Z" fill="#3f5f93" stroke="#3f5f93" stroke-width="1.1"/><circle cx="4" cy="8" r="1.7" fill="#3f5f93"/><circle cx="12" cy="8" r="1.7" fill="#3f5f93"/></svg>
<div class="t" style="left:470.5px;top:479.0px;font-size:10.8px;">B</div>
<svg class="a" style="left:450px;top:480.5px" width="16" height="10"><path d="M1 7.5 V5 L3.5 4.5 L5.5 2 H10.5 L13 4.5 L15 5 V7.5 Z" fill="none" stroke="#50627f" stroke-width="1.1"/><circle cx="4" cy="8" r="1.7" fill="#50627f"/><circle cx="12" cy="8" r="1.7" fill="#50627f"/></svg>
<div class="t" style="left:470.5px;top:492.0px;font-size:10.8px;">C1</div>
<svg class="a" style="left:450px;top:493.5px" width="16" height="10"><rect x="0.5" y="1.5" width="10" height="6" fill="#50627f"/><path d="M11 3.5 H13.5 L15.5 5.5 V7.5 H11 Z" fill="#50627f"/><circle cx="3.5" cy="8.3" r="1.5" fill="#50627f"/><circle cx="12.5" cy="8.3" r="1.5" fill="#50627f"/></svg>
<div class="t" style="left:470.5px;top:505.0px;font-size:10.8px;">C</div>
<svg class="a" style="left:450px;top:506.5px" width="16" height="10"><rect x="0.5" y="1.5" width="10" height="6" fill="#50627f"/><path d="M11 3.5 H13.5 L15.5 5.5 V7.5 H11 Z" fill="#50627f"/><circle cx="3.5" cy="8.3" r="1.5" fill="#50627f"/><circle cx="12.5" cy="8.3" r="1.5" fill="#50627f"/></svg>
<div class="t" style="left:470.5px;top:518.0px;font-size:10.8px;">D1</div>
<svg class="a" style="left:450px;top:519.5px" width="16" height="10"><rect x="0.5" y="1" width="15" height="7" rx="1" fill="none" stroke="#50627f" stroke-width="1.1"/><path d="M3 1.5 V5 M6 1.5 V5 M9 1.5 V5 M12 1.5 V5 M1 5 H15" stroke="#50627f" stroke-width="0.9"/><circle cx="3.5" cy="8.5" r="1.4" fill="#50627f"/><circle cx="12.5" cy="8.5" r="1.4" fill="#50627f"/></svg>
<div class="a" style="left:643px;top:400px;width:16px;height:130px;background:#fafafa;"></div>
<div class="a" style="left:644px;top:417px;width:14px;height:48px;background:#cdcdcd;"></div>
<svg class="a" style="left:647px;top:406px" width="10" height="6"><path d="M1 5 L5 1 L9 5" fill="none" stroke="#505050" stroke-width="1.3"/></svg>
<svg class="a" style="left:647px;top:518px" width="10" height="6"><path d="M1 1 L5 5 L9 1" fill="none" stroke="#505050" stroke-width="1.3"/></svg>
<svg class="a" style="left:551px;top:474px" width="14" height="21"><path d="M1.5 1 V16 L5 12.5 L8 19 L10.5 18 L7.5 11.5 H12.5 Z" fill="#000" stroke="#fff" stroke-width="1"/></svg>
<div class="a" style="left:0px;top:653px;width:1323px;height:19px;background:#dcdce0;"></div>
<div class="a" style="left:0px;top:653px;width:1323px;height:1px;background:#c4c4c8;"></div>
<div class="t" style="left:6.4px;top:658.0px;font-size:11.85px;color:#111;">Fahrzeuge - Abgerechnet: 4 / Alias: 0 / Archiviert: 0 / Summe: 4 - Gefiltert: 4</div>
<svg class="a" style="left:1311px;top:658px" width="11" height="10"><rect x="3" y="0.5" width="7" height="6" fill="none" stroke="#222"/><rect x="0.5" y="3.5" width="7" height="6" fill="#dcdce0" stroke="#222"/></svg>
<div class="t" style="left:2.7px;top:681.5px;font-size:10.6px;">Suche:</div>
<div class="a" style="left:42px;top:677px;width:822px;height:20px;background:#fff;border:1px solid #7a7a7a;box-sizing:border-box;"></div>
<div class="t" style="left:869.2px;top:681.5px;font-size:10.6px;">Gruppe:</div>
<div class="a" style="left:914px;top:676px;width:420px;height:22px;background:#fff;border:1px solid #7a7a7a;box-sizing:border-box;"></div>
<svg class="a" style="left:1310px;top:684px" width="11" height="6.5"><path d="M1 1 L5.5 5.5 L10 1" fill="none" stroke="#404040" stroke-width="1"/></svg>
<div class="a" style="left:3px;top:704px;width:1330px;height:280px;background:#ffffff;border:1px solid #a0a0a4;box-sizing:border-box;"></div>
<div class="a" style="left:4px;top:728px;width:1323px;height:23px;background:#fff;"></div>
<div class="a" style="left:4px;top:750px;width:1323px;height:1px;background:#e3e3e6;"></div>
<div class="a" style="left:4px;top:751px;width:1323px;height:23px;background:#f4f4f6;"></div>
<div class="a" style="left:4px;top:773px;width:1323px;height:1px;background:#e3e3e6;"></div>
<div class="a" style="left:4px;top:774px;width:1323px;height:23px;background:#fff;"></div>
<div class="a" style="left:4px;top:796px;width:1323px;height:1px;background:#e3e3e6;"></div>
<div class="a" style="left:4px;top:797px;width:1323px;height:22px;background:#3d95f0;"></div>
<div class="a" style="left:142px;top:705px;width:1px;height:114px;background:#e3e3e6;"></div>
<div class="a" style="left:406px;top:705px;width:1px;height:114px;background:#e3e3e6;"></div>
<div class="a" style="left:717px;top:705px;width:1px;height:114px;background:#e3e3e6;"></div>
<div class="a" style="left:1003px;top:705px;width:1px;height:114px;background:#e3e3e6;"></div>
<div class="a" style="left:1209px;top:705px;width:1px;height:114px;background:#e3e3e6;"></div>
<div class="a" style="left:1248px;top:705px;width:1px;height:114px;background:#e3e3e6;"></div>
<div class="t" style="left:8.8px;top:711.0px;font-size:12.4px;color:#111;font-weight:bold;letter-spacing:0.25px;">Letzte Aktualisierung</div>
<div class="t" style="left:147.4px;top:711.0px;font-size:12.4px;color:#111;font-weight:bold;letter-spacing:0.25px;">Name (Kennzeichen)</div>
<div class="t" style="left:411.3px;top:711.0px;font-size:12.4px;color:#111;font-weight:bold;letter-spacing:0.25px;">Seriennummer</div>
<div class="t" style="left:721.5px;top:711.0px;font-size:12.4px;color:#111;font-weight:bold;letter-spacing:0.25px;">Version / Typ / GSM</div>
<div class="t" style="left:1008.5px;top:711.0px;font-size:12.4px;color:#111;font-weight:bold;letter-spacing:0.25px;">Telefon</div>
<div class="t" style="left:1214px;top:711.0px;font-size:12.4px;color:#111;font-weight:bold;letter-spacing:0.25px;">Sync</div>
<div class="t" style="left:1253px;top:711.0px;font-size:12.4px;color:#111;font-weight:bold;letter-spacing:0.25px;">Verbunden</div>
<svg class="a" style="left:70px;top:705px" width="8" height="5"><path d="M1 1 L4.0 4 L7 1" fill="none" stroke="#888" stroke-width="1"/></svg>
<div class="t" style="left:7.5px;top:734.0px;font-size:10.8px;letter-spacing:0.16px;">26.06.2023 15:54:55</div>
<div class="t" style="left:167.4px;top:734.0px;font-size:10.8px;">Wandstation twinline Eingang (001)</div>
<div class="t" style="left:410px;top:734.0px;font-size:10.8px;">862549043711657</div>
<div class="t" style="left:721px;top:734.0px;font-size:10.8px;">22.05.1738/1738 SINON</div>
<div class="t" style="left:1008px;top:734.0px;font-size:10.8px;">+423663910324953</div>
<svg class="a" style="left:146px;top:731.5px" width="16" height="16"><circle cx="8" cy="8" r="6.5" fill="#fff" stroke="#555" stroke-width="1.3"/><circle cx="8" cy="8" r="3" fill="#111"/></svg>
<div class="a" style="left:1213px;top:733px;width:13px;height:13px;background:#fff;border:1px solid #333;box-sizing:border-box;"></div>
<div class="a" style="left:1252px;top:733px;width:13px;height:13px;background:#fff;border:1px solid #333;box-sizing:border-box;"></div>
<svg class="a" style="left:1252px;top:733px" width="13" height="13"><path d="M2.5 6.5 L5 9.5 L10.5 3" fill="none" stroke="#333" stroke-width="1.1"/></svg>
<div class="t" style="left:7.5px;top:757.0px;font-size:10.8px;letter-spacing:0.16px;">26.06.2023 14:53:45</div>
<div class="t" style="left:167.4px;top:757.0px;font-size:10.8px;">Test MAE2 Lars (FMB125)</div>
<div class="t" style="left:410px;top:757.0px;font-size:10.8px;">350544500198307</div>
<div class="t" style="left:721px;top:757.0px;font-size:10.8px;">03.27.13_552 FMB125</div>
<div class="t" style="left:1008px;top:757.0px;font-size:10.8px;">+447408058743</div>
<svg class="a" style="left:146px;top:754.5px" width="16" height="16"><circle cx="8" cy="8" r="6.5" fill="#fff" stroke="#555" stroke-width="1.3"/><circle cx="8" cy="8" r="3" fill="#111"/></svg>
<div class="a" style="left:1213px;top:756px;width:13px;height:13px;background:#fff;border:1px solid #333;box-sizing:border-box;"></div>
<div class="a" style="left:1252px;top:756px;width:13px;height:13px;background:#fff;border:1px solid #333;box-sizing:border-box;"></div>
<svg class="a" style="left:1252px;top:756px" width="13" height="13"><path d="M2.5 6.5 L5 9.5 L10.5 3" fill="none" stroke="#333" stroke-width="1.1"/></svg>
<div class="t" style="left:7.5px;top:780.0px;font-size:10.8px;letter-spacing:0.16px;">26.06.2023 13:27:18</div>
<div class="t" style="left:167.4px;top:780.0px;font-size:10.8px;">Wandstation twinline Lager (002)</div>
<div class="t" style="left:410px;top:780.0px;font-size:10.8px;">012CAE1B0C000070</div>
<div class="t" style="left:721px;top:780.0px;font-size:10.8px;">20.04.1696/1738 STATION 10.00.063</div>
<div class="t" style="left:1008px;top:780.0px;font-size:10.8px;">+491702978199</div>
<svg class="a" style="left:146px;top:777.5px" width="16" height="16"><circle cx="8" cy="8" r="6.5" fill="#fff" stroke="#555" stroke-width="1.3"/><circle cx="8" cy="8" r="3" fill="#111"/></svg>
<div class="a" style="left:1213px;top:779px;width:13px;height:13px;background:#fff;border:1px solid #333;box-sizing:border-box;"></div>
<div class="a" style="left:1252px;top:779px;width:13px;height:13px;background:#fff;border:1px solid #333;box-sizing:border-box;"></div>
<div class="t" style="left:7.5px;top:802.5px;font-size:10.8px;color:#fff;letter-spacing:0.16px;">21.06.2023 12:15:40</div>
<div class="t" style="left:167.4px;top:802.5px;font-size:10.8px;color:#fff;">VW Golf Variant (KB - JB 270)</div>
<div class="t" style="left:410px;top:802.5px;font-size:10.8px;color:#fff;">359593081519341</div>
<div class="t" style="left:721px;top:802.5px;font-size:10.8px;color:#fff;">22.05.1738/1738 VARUNA 10.01.140</div>
<div class="t" style="left:1008px;top:802.5px;font-size:10.8px;color:#fff;">+423663999973653</div>
<svg class="a" style="left:146px;top:800.0px" width="16" height="16"><circle cx="8" cy="8.5" r="6" fill="#d6e8d0"/><path d="M3.5 8 Q8 12 12.5 8" fill="none" stroke="#5aa84a" stroke-width="2"/><path d="M4 3 L5 5 H11 L12 3" fill="none" stroke="#aaa" stroke-width="1"/></svg>
<div class="a" style="left:1213px;top:802px;width:13px;height:13px;background:#fff;border:1px solid #222;box-sizing:border-box;"></div>
<div class="a" style="left:1252px;top:802px;width:13px;height:13px;background:#fff;border:1px solid #222;box-sizing:border-box;"></div>
<div class="a" style="left:0px;top:0px;width:1px;height:974px;background:#000;"></div>
<svg class="a" style="left:0;top:0" width="1323" height="974"><defs><filter id="sh" x="-10%" y="-10%" width="120%" height="120%"><feGaussianBlur in="SourceAlpha" stdDeviation="2.5"/><feOffset dx="1" dy="3"/><feComponentTransfer><feFuncA type="linear" slope="0.35"/></feComponentTransfer><feMerge><feMergeNode/><feMergeNode in="SourceGraphic"/></feMerge></filter></defs><ellipse cx="530.5" cy="452" rx="261" ry="164" transform="rotate(-1 530.5 452)" fill="none" stroke="#ef1414" stroke-width="2.6" filter="url(#sh)"/></svg>
</body></html>
